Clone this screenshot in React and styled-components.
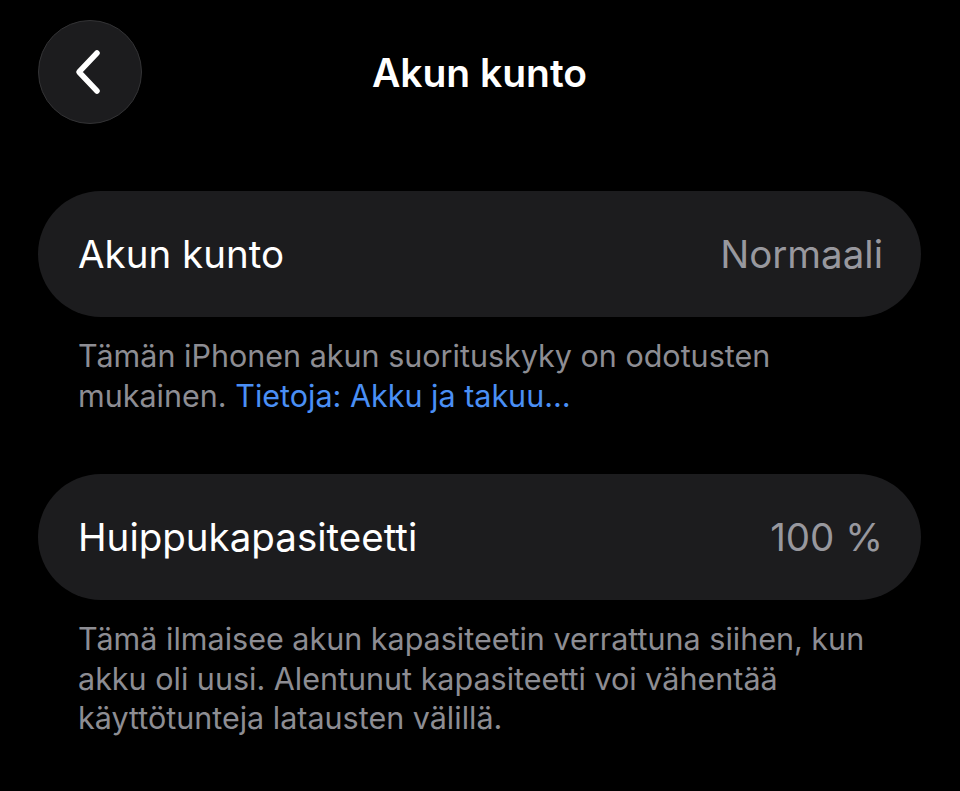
import { createGlobalStyle, styled } from "styled-components";

const GlobalStyle = createGlobalStyle`
    html, body {
        margin: 0;
        padding: 0;
        background: #000000;
    }
    body {
        font-family: Inter, "Noto Sans", "Liberation Sans", sans-serif;
        color: #ffffff;
        -webkit-font-smoothing: antialiased;
    }
`;

const sections = [
    {
        id: "health",
        label: "Akun kunto",
        value: "Normaali",
        text: "Tämän iPhonen akun suorituskyky on odotusten mukainen.",
        link: "Tietoja: Akku ja takuu…",
    },
    {
        id: "capacity",
        label: "Huippukapasiteetti",
        value: "100 %",
        text: "Tämä ilmaisee akun kapasiteetin verrattuna siihen, kun akku oli uusi. Alentunut kapasiteetti voi vähentää käyttötunteja latausten välillä.",
    },
];

function App() {
    return (
        <StPage>
            <GlobalStyle />
            <StHeader>
                <StBackButton aria-label="Takaisin">
                    <svg width="30" height="46" viewBox="0 0 30 46" fill="none">
                        <path
                            d="M24 4 L6 23 L24 42"
                            stroke="#ffffff"
                            strokeWidth="5.5"
                            strokeLinecap="round"
                            strokeLinejoin="round"
                        />
                    </svg>
                </StBackButton>
                <StTitle>Akun kunto</StTitle>
                <span />
            </StHeader>
            <StList>
                {sections.map((item) => (
                    <StSection key={item.id}>
                        <StCard>
                            <StLabel>{item.label}</StLabel>
                            <StValue>{item.value}</StValue>
                        </StCard>
                        <StFooter>
                            {item.text}
                            {item.link && (
                                <>
                                    {" "}
                                    <StLink href="#">{item.link}</StLink>
                                </>
                            )}
                        </StFooter>
                    </StSection>
                ))}
            </StList>
        </StPage>
    );
}

export default App;

const StPage = styled.div`
    min-height: 791px;
    padding: 20px 39px 0 38px;
    box-sizing: border-box;
    background: #000000;
`;
const StHeader = styled.header`
    display: grid;
    grid-template-columns: 1fr auto 1fr;
    align-items: center;
    height: 104px;
`;
const StBackButton = styled.button`
    width: 104px;
    height: 104px;
    border-radius: 50%;
    background: #1c1c1e;
    border: 1.5px solid #333335;
    display: flex;
    align-items: center;
    justify-content: center;
    padding: 0 4px 0 0;
    cursor: pointer;
`;
const StTitle = styled.h1`
    margin: 0;
    font-size: 39px;
    font-weight: 600;
    color: #ffffff;
`;
const StList = styled.div`
    display: flex;
    flex-direction: column;
    gap: 59px;
    margin-top: 67px;
`;
const StSection = styled.section`
    display: flex;
    flex-direction: column;
    gap: 19px;
`;
const StCard = styled.div`
    height: 126px;
    border-radius: 63px;
    background: #1c1c1e;
    display: flex;
    align-items: center;
    justify-content: space-between;
    padding: 0 38px 0 40px;
    box-sizing: border-box;
`;
const StLabel = styled.span`
    font-size: 38.5px;
    color: #ffffff;
`;
const StValue = styled.span`
    font-size: 38.5px;
    color: #98989e;
`;
const StFooter = styled.p`
    margin: 0;
    padding: 0 30px 0 40px;
    font-size: 30.5px;
    line-height: 39.5px;
    color: #8d8d93;
`;
const StLink = styled.a`
    color: #4a8ff5;
    text-decoration: none;
`;
